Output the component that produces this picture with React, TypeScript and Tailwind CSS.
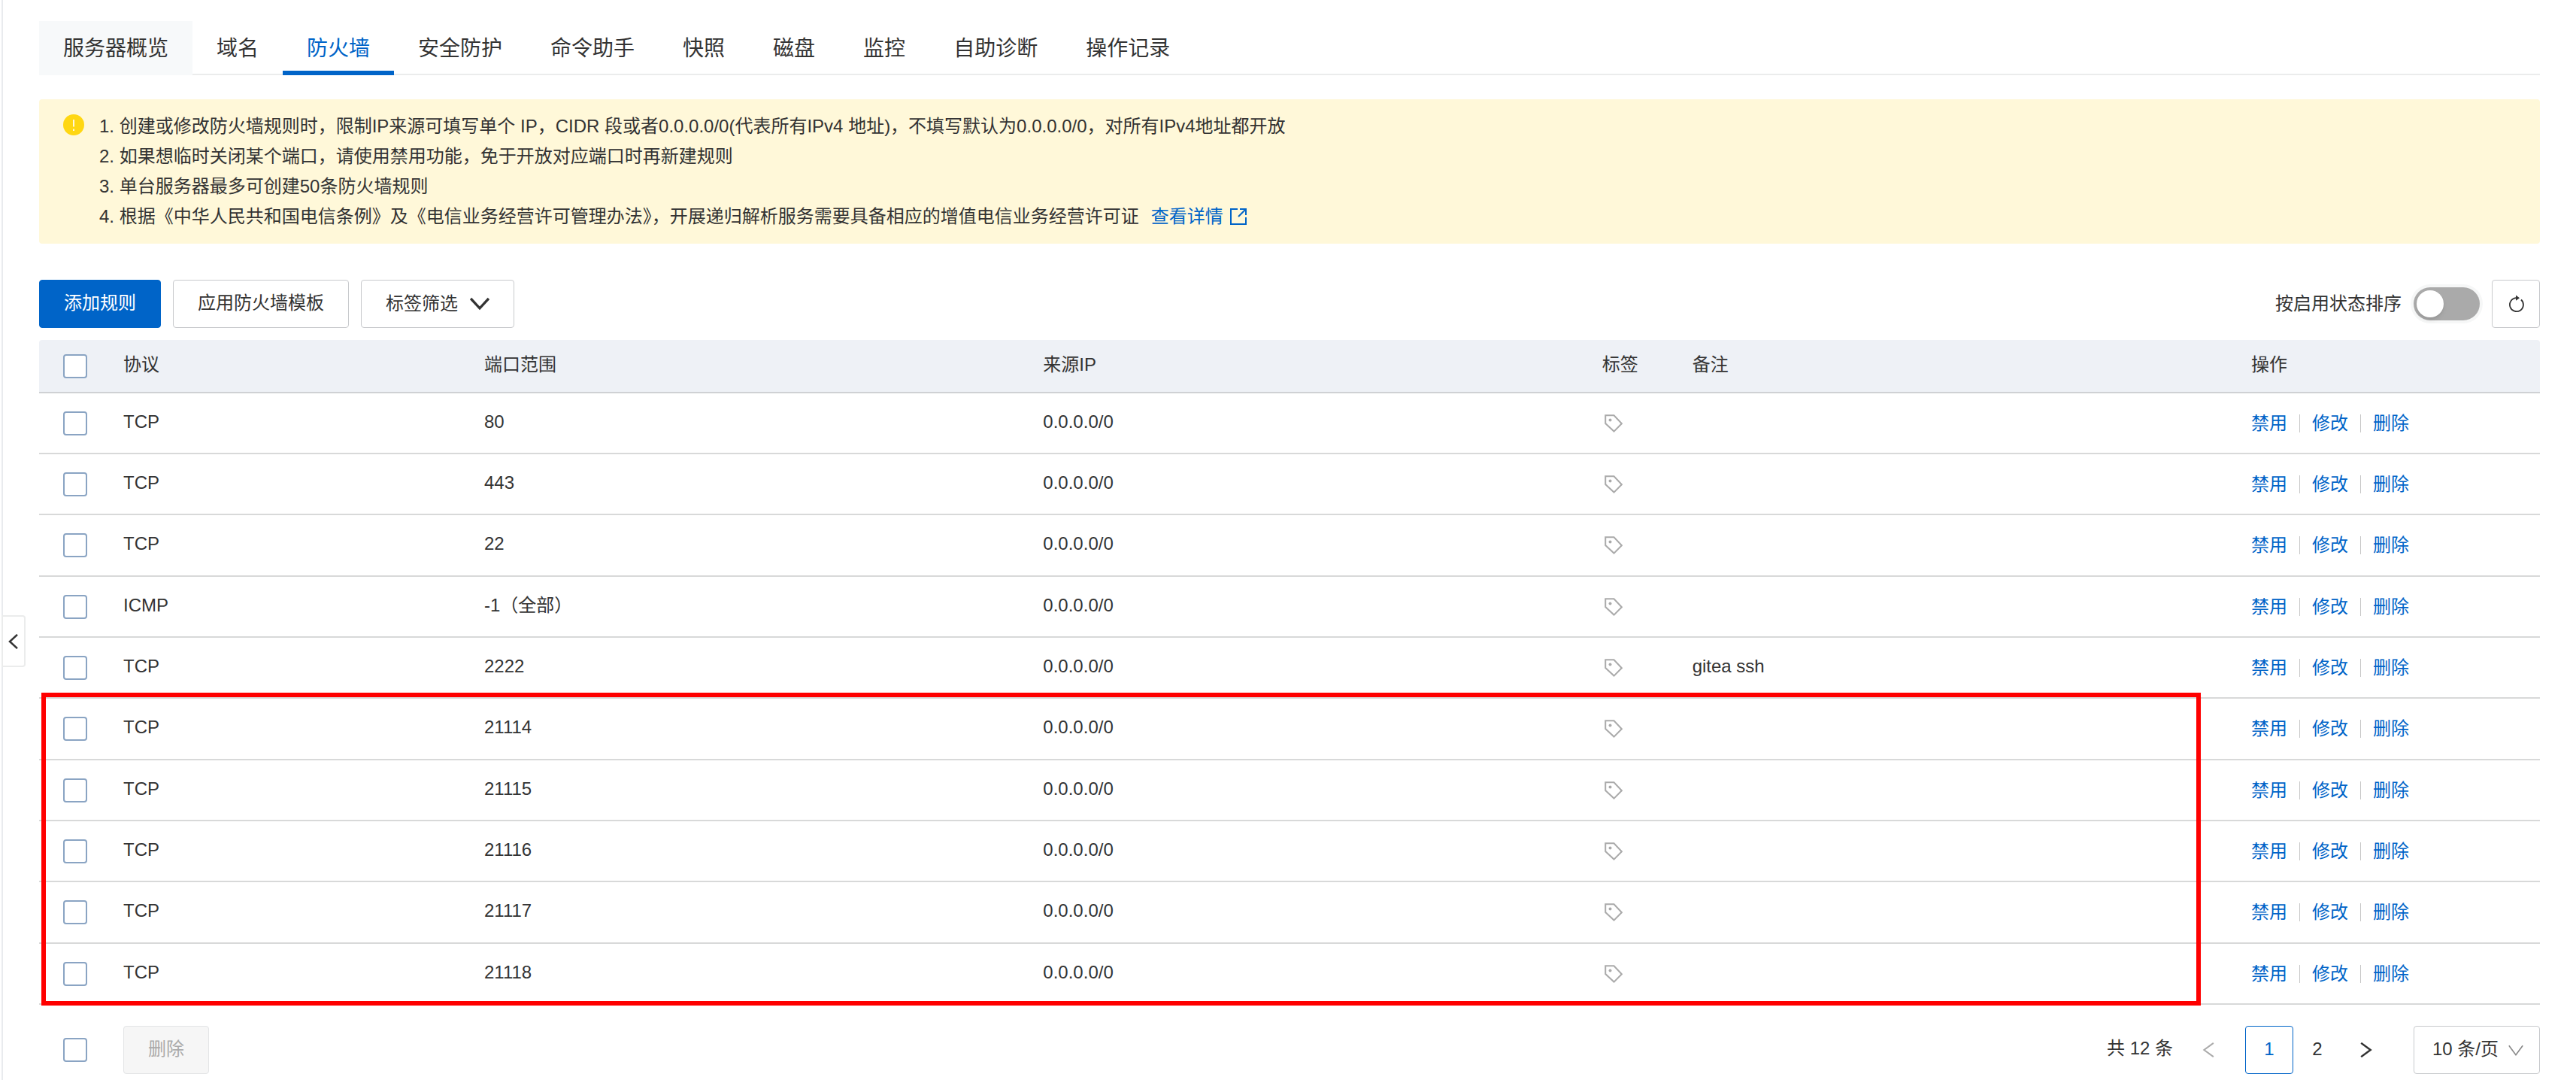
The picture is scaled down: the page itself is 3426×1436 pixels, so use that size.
import { useState } from 'react'
import clsx from 'clsx'

const TABS = ['服务器概览', '域名', '防火墙', '安全防护', '命令助手', '快照', '磁盘', '监控', '自助诊断', '操作记录']

const TIPS = [
  '1. 创建或修改防火墙规则时，限制IP来源可填写单个 IP，CIDR 段或者0.0.0.0/0(代表所有IPv4 地址)，不填写默认为0.0.0.0/0，对所有IPv4地址都开放',
  '2. 如果想临时关闭某个端口，请使用禁用功能，免于开放对应端口时再新建规则',
  '3. 单台服务器最多可创建50条防火墙规则',
]

const RULES = [
  { protocol: 'TCP', port: '80', source: '0.0.0.0/0', remark: '' },
  { protocol: 'TCP', port: '443', source: '0.0.0.0/0', remark: '' },
  { protocol: 'TCP', port: '22', source: '0.0.0.0/0', remark: '' },
  { protocol: 'ICMP', port: '-1（全部）', source: '0.0.0.0/0', remark: '' },
  { protocol: 'TCP', port: '2222', source: '0.0.0.0/0', remark: 'gitea ssh' },
  { protocol: 'TCP', port: '21114', source: '0.0.0.0/0', remark: '' },
  { protocol: 'TCP', port: '21115', source: '0.0.0.0/0', remark: '' },
  { protocol: 'TCP', port: '21116', source: '0.0.0.0/0', remark: '' },
  { protocol: 'TCP', port: '21117', source: '0.0.0.0/0', remark: '' },
  { protocol: 'TCP', port: '21118', source: '0.0.0.0/0', remark: '' },
]

const ACTIONS = ['禁用', '修改', '删除']

function Chevron({ className, d }: { className: string; d: string }) {
  return (
    <svg viewBox="0 0 24 24" fill="none" stroke="currentColor" className={className} aria-hidden="true">
      <path d={d} />
    </svg>
  )
}

function TagIcon() {
  return (
    <svg viewBox="0 0 24 24" className="size-6" fill="none" stroke="currentColor" strokeWidth="2" aria-hidden="true">
      <path d="M1.2 1.2H12.5L22.8 12.2L12.5 22.6L1.2 12Z" />
      <circle cx="7.5" cy="7.5" r="2" fill="currentColor" stroke="none" />
    </svg>
  )
}

function Checkbox({ label, checked, onChange }: { label: string; checked: boolean; onChange: () => void }) {
  return (
    <input
      type="checkbox"
      aria-label={label}
      checked={checked}
      onChange={onChange}
      className="block size-8 appearance-none rounded-sm border-2 border-[#8aa4c3] bg-white checked:bg-[#0064c8]"
    />
  )
}

function Tabs() {
  const [active, setActive] = useState('防火墙')

  return (
    <nav className="flex border-b-2 border-[#ebecec]">
      {TABS.map((tab, i) => (
        <button
          key={tab}
          onClick={() => setActive(tab)}
          className={clsx(
            '-mb-[2px] h-[72px] border-b-[6px] px-8 pt-3 pb-1 text-[28px] leading-10',
            i === 0 && 'bg-[#f7f9fa]',
            active === tab ? 'border-[#0064c8] text-[#0064c8]' : 'border-transparent'
          )}
        >
          {tab}
        </button>
      ))}
    </nav>
  )
}

function Notice() {
  return (
    <div className="mt-8 flex items-start gap-5 rounded-sm bg-[#fff8d9] px-8 py-4">
      <svg viewBox="0 0 28 28" className="my-1 size-7 shrink-0" aria-hidden="true">
        <circle cx="14" cy="14" r="14" fill="#ffd712" />
        <path d="M14 7v9.5M14 19.5v2.5" stroke="#fff7db" strokeWidth="2" />
      </svg>
      <div className="leading-10">
        {TIPS.map((tip) => (
          <p key={tip}>{tip}</p>
        ))}
        <p className="flex items-center">
          4. 根据《中华人民共和国电信条例》及《电信业务经营许可管理办法》，开展递归解析服务需要具备相应的增值电信业务经营许可证
          <a href="#detail" className="ml-4 flex items-center gap-2 text-[#0064c8]">
            查看详情
            <svg viewBox="0 0 24 24" className="size-6" fill="none" stroke="currentColor" strokeWidth="2" aria-hidden="true">
              <path d="M11 2H2V22H22V13M14 2H22V10M22 2L12 12" />
            </svg>
          </a>
        </p>
      </div>
    </div>
  )
}

function Toolbar() {
  const [sorted, setSorted] = useState(false)

  return (
    <div className="mt-12 flex items-center justify-between">
      <div className="flex gap-4">
        <button className="h-16 rounded-sm border border-[#0064c8] bg-[#0064c8] px-8 pb-0.5 text-white">
          添加规则
        </button>
        <button className="h-16 rounded-sm border border-[#c8cacd] px-8 pb-0.5">应用防火墙模板</button>
        <button className="flex h-16 items-center gap-4 rounded-sm border border-[#c8cacd] px-8">
          标签筛选
          <Chevron className="size-[26px] stroke-[3]" d="M1 5.5L12 17.5L23 5.5" />
        </button>
      </div>
      <div className="flex items-center gap-4">
        <label htmlFor="sort">按启用状态排序</label>
        <div className="relative h-11 w-[88px]">
          <input
            id="sort"
            type="checkbox"
            role="switch"
            checked={sorted}
            onChange={() => setSorted(!sorted)}
            className="peer block h-11 w-[88px] appearance-none rounded-full bg-[#aaaaaa] ring-4 ring-[#f6f7f7] checked:bg-[#0064c8]"
          />
          <span className="pointer-events-none absolute top-1 left-1 size-9 rounded-full bg-white shadow-md peer-checked:left-12" />
        </div>
        <button aria-label="刷新" className="flex size-16 items-center justify-center rounded-sm border border-[#c8cacd]">
          <svg viewBox="0 0 24 24" className="size-6" fill="none" stroke="currentColor" strokeWidth="1.8" aria-hidden="true">
            <path d="M19 6.5A9 9 0 1 1 12 4.2H14" />
            <path d="M12 0.5L17 4.2L12 7.8Z" fill="currentColor" stroke="none" />
          </svg>
        </button>
      </div>
    </div>
  )
}

function RuleTable() {
  const [selected, setSelected] = useState<string[]>([])
  const allSelected = selected.length === RULES.length

  const toggle = (port: string) =>
    setSelected(selected.includes(port) ? selected.filter((p) => p !== port) : [...selected, port])
  const toggleAll = () => setSelected(allSelected ? [] : RULES.map((r) => r.port))

  return (
    <>
      <div className="relative mt-4">
        <table className="w-full table-fixed border-separate border-spacing-0 text-left">
          <colgroup>
            <col className="w-24" />
            <col className="w-[480px]" />
            <col />
            <col />
            <col className="w-[120px]" />
            <col />
            <col className="w-[400px]" />
          </colgroup>
          <thead>
            <tr className="h-[71px] bg-[#eef1f6] *:border-b-2 *:border-[#cfd1d4] *:px-4 *:font-normal">
              <th className="rounded-tl-sm">
                <div className="flex justify-center">
                  <Checkbox label="全选" checked={allSelected} onChange={toggleAll} />
                </div>
              </th>
              <th className="pb-1">协议</th>
              <th className="pb-1">端口范围</th>
              <th className="pb-1">来源IP</th>
              <th className="pb-1">标签</th>
              <th className="pb-1">备注</th>
              <th className="rounded-tr-sm pb-1">操作</th>
            </tr>
          </thead>
          <tbody>
            {RULES.map((rule) => (
              <tr key={rule.port} className="h-[81px] *:border-b-2 *:border-[#d8d9d9] *:px-4 nth-[3n]:h-[82px]">
                <td>
                  <div className="flex justify-center">
                    <Checkbox
                      label={rule.port}
                      checked={selected.includes(rule.port)}
                      onChange={() => toggle(rule.port)}
                    />
                  </div>
                </td>
                <td className="pb-1">{rule.protocol}</td>
                <td className="pb-1">{rule.port}</td>
                <td className="pb-1">{rule.source}</td>
                <td>
                  <button aria-label="编辑标签" className="block px-[3px] text-[#aaaaaa]">
                    <TagIcon />
                  </button>
                </td>
                <td className="pb-1">{rule.remark}</td>
                <td>
                  <div className="flex items-center">
                    {ACTIONS.map((action, i) => (
                      <div key={action} className="flex items-center">
                        {i > 0 && <span className="mx-4 h-6 w-px bg-[#c8c8c8]" />}
                        <a href="#action" className="text-[#0064c8]">
                          {action}
                        </a>
                      </div>
                    ))}
                  </div>
                </td>
              </tr>
            ))}
          </tbody>
        </table>
        {/* Highlight around the last five rules */}
        <div className="pointer-events-none absolute right-[451px] -bottom-px left-[3px] h-[416px] border-[6px] border-[#ff0000]" />
      </div>

      <div className="mt-7 flex items-center justify-between">
        <div className="flex items-center">
          <div className="flex w-24 justify-center">
            <Checkbox label="全选规则" checked={allSelected} onChange={toggleAll} />
          </div>
          <button
            disabled={selected.length === 0}
            className="ml-4 h-16 rounded-sm border border-[#e3e4e6] bg-[#f6f6f6] px-8 pb-0.5 text-[#aaaaaa]"
          >
            删除
          </button>
        </div>
        <Pagination />
      </div>
    </>
  )
}

function Pagination() {
  const [page, setPage] = useState(1)

  return (
    <div className="flex items-center">
      <span className="mr-4 pb-1">共 12 条</span>
      <button
        aria-label="上一页"
        disabled={page === 1}
        onClick={() => setPage(1)}
        className="mr-4 flex size-16 items-center justify-center disabled:text-[#aaaaaa]"
      >
        <Chevron className="size-5 stroke-[2.4]" d="M19 1L4 12L19 23" />
      </button>
      {[1, 2].map((n) => (
        <button
          key={n}
          onClick={() => setPage(n)}
          className={clsx(
            'size-16 rounded-sm border pb-0.5',
            page === n ? 'border-[#0064c8] text-[#0064c8]' : 'border-transparent'
          )}
        >
          {n}
        </button>
      ))}
      <button aria-label="下一页" onClick={() => setPage(2)} className="mr-8 flex size-16 items-center justify-center">
        <Chevron className="size-5 stroke-[3]" d="M5 1L20 12L5 23" />
      </button>
      <div className="relative">
        <select
          aria-label="每页条数"
          className="block h-16 w-[168px] appearance-none rounded-sm border border-[#c8cacd] bg-white pb-0.5 pl-6"
        >
          <option>10 条/页</option>
          <option>20 条/页</option>
          <option>50 条/页</option>
        </select>
        <Chevron
          className="pointer-events-none absolute top-[22px] right-[22px] size-5 stroke-[2] text-[#888888]"
          d="M1 5L12 20L23 5"
        />
      </div>
    </div>
  )
}

export default function App() {
  return (
    <div className="relative flex min-h-screen bg-white pl-[2px] font-['Liberation_Sans','Noto_Sans_CJK_SC',sans-serif] text-2xl text-[#333333]">
      <button
        aria-label="收起"
        className="absolute top-[818px] left-[2px] flex h-[69px] w-8 items-center justify-center rounded-r-sm border-2 border-[#ebecec] bg-white"
      >
        <Chevron className="size-5 stroke-[3]" d="M18 1L6 12L18 23" />
      </button>
      <main className="min-w-0 flex-1 border-l-2 border-[#e9ebee] pt-7 pr-12 pl-12">
        <Tabs />
        <Notice />
        <Toolbar />
        <RuleTable />
      </main>
    </div>
  )
}
